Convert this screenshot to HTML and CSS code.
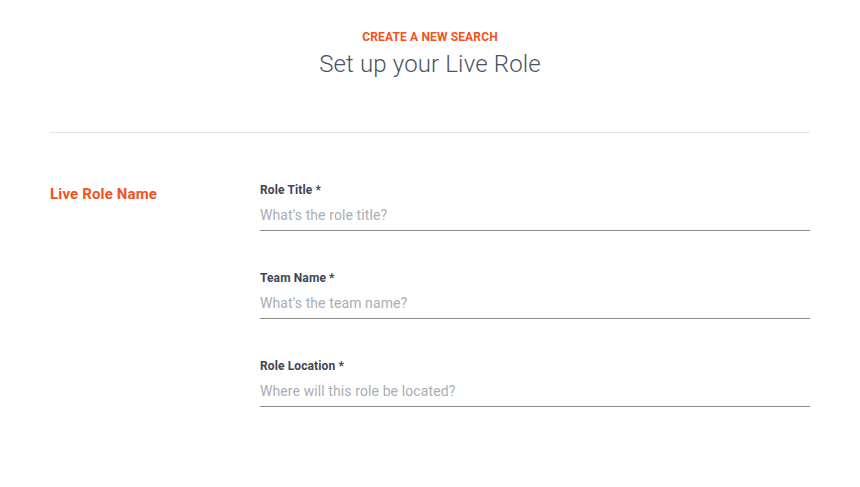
FILE: index.html
```html
<!DOCTYPE html>
<html lang="en">
<head>
<meta charset="UTF-8">
<title>Set up your Live Role</title>
<link rel="stylesheet" href="styles.css">
</head>
<body>
<main class="page">
    <header class="intro">
        <div class="eyebrow">CREATE A NEW SEARCH</div>
        <h1>Set up your Live Role</h1>
    </header>
    <form class="section">
        <h2 class="section-title">Live Role Name</h2>
        <div class="fields">
            <label class="field">
                <span class="field-label">Role Title *</span>
                <input type="text" placeholder="What's the role title?">
            </label>
            <label class="field">
                <span class="field-label">Team Name *</span>
                <input type="text" placeholder="What's the team name?">
            </label>
            <label class="field">
                <span class="field-label">Role Location *</span>
                <input type="text" placeholder="Where will this role be located?">
            </label>
        </div>
    </form>
</main>
</body>
</html>
```
FILE: styles.css
```css
body{
    margin:0;
    font-family:Roboto,"Liberation Sans",sans-serif;
    background:#fff;
    color:#3c4657;
    letter-spacing:0.12px;
}
.page{
    padding:0 50px;
}
.intro{
    text-align:center;
    padding:30px 0 54px;
    border-bottom:1px solid #dfe2e6;
}
.eyebrow{
    font-size:12px;
    line-height:14px;
    font-weight:700;
    color:#f4511e;
    letter-spacing:0.15px;
}
h1{
    margin:6px 0 0;
    font-size:24px;
    line-height:28px;
    font-weight:300;
    color:#4a5466;
    letter-spacing:0.15px;
}
.section{
    display:grid;
    grid-template-columns:210px 1fr;
    padding-top:50px;
}
.section-title{
    margin:2px 0 0;
    font-size:15px;
    line-height:18px;
    font-weight:700;
    color:#f4511e;
    letter-spacing:0.15px;
}
.fields{
    display:flex;
    flex-direction:column;
    gap:40px;
}
.field{
    display:flex;
    flex-direction:column;
}
.field-label{
    font-size:12px;
    line-height:14px;
    font-weight:700;
    color:#3c4657;
}
input{
    margin-top:8px;
    padding:0 0 6px;
    font-family:inherit;
    font-size:14px;
    line-height:20px;
    letter-spacing:0.1px;
    height:26px;
    box-sizing:border-box;
    border:none;
    border-bottom:1px solid #8c8c8c;
    outline:none;
    color:#3c4657;
    background:transparent;
}
input::placeholder{color:#a9adb5;}
```
